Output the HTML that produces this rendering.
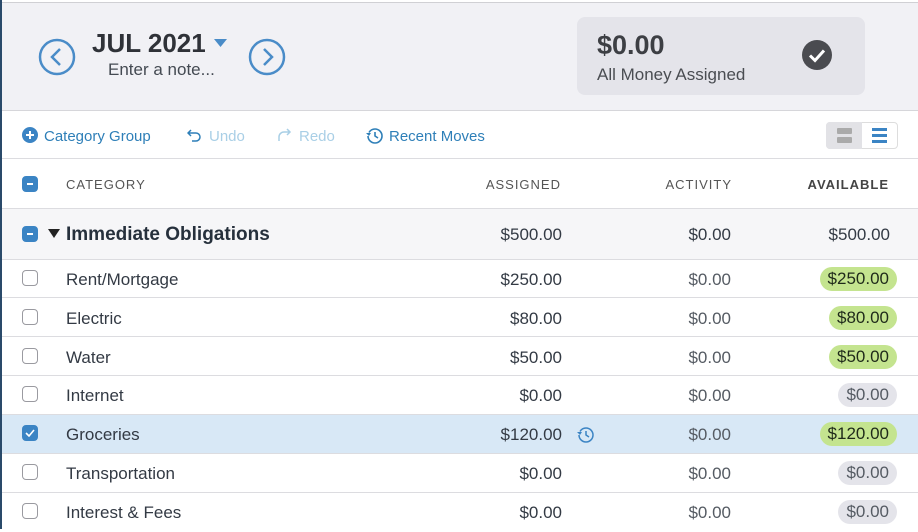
<!DOCTYPE html>
<html><head><style>
*{box-sizing:border-box;margin:0;padding:0}
body{width:918px;height:529px;overflow:hidden;background:#fff;font-family:"Liberation Sans",sans-serif;position:relative;color:#2f3640}
.lb{position:absolute;left:0;top:0;width:2px;height:529px;background:#2a4a6a}
.hdr{position:absolute;left:2px;top:2px;width:916px;height:109px;background:#f1f1f5;border-bottom:1px solid #d6d6da;border-top:1px solid #d0d0d4}
.abs{position:absolute}
.row{position:absolute;left:2px;width:916px;border-bottom:1px solid #dcdce0}
.cb{position:absolute;left:22px;width:16px;height:16px;border:1px solid #9a9aa0;border-radius:4px;background:#fff}
.name{position:absolute;left:66px;font-size:17px;color:#333a44}
.num{position:absolute;font-size:17px;text-align:right;color:#333a44}
.a{right:356px}.c{right:187px;color:#555b63}
.pill{position:absolute;right:21px;height:24px;border-radius:12px;padding:0 8px;font-size:17px;line-height:24px;color:#1f2a1a}
.g{background:#c4e48f}.z{background:#e4e4ea;color:#555b63}
.tb{position:absolute;top:128px;font-size:15px;color:#2e7fb8}
.th{position:absolute;top:177px;font-size:13px;letter-spacing:1px;color:#555}
</style></head><body>
<div class="lb"></div>
<div class="hdr"></div>
<svg class="abs" style="left:38px;top:38px" width="38" height="38"><circle cx="19" cy="19" r="17" fill="none" stroke="#4a8cc8" stroke-width="2.5"/><path d="M22 11l-8 8 8 8" fill="none" stroke="#4a8cc8" stroke-width="2.5"/></svg>
<svg class="abs" style="left:248px;top:38px" width="38" height="38"><circle cx="19" cy="19" r="17" fill="none" stroke="#4a8cc8" stroke-width="2.5"/><path d="M16 11l8 8-8 8" fill="none" stroke="#4a8cc8" stroke-width="2.5"/></svg>
<div class="abs" style="left:92px;top:28px;font-size:26px;font-weight:bold;color:#2f3238">JUL 2021</div>
<svg class="abs" style="left:214px;top:38px" width="14" height="10"><path d="M0 1h13l-6.5 8z" fill="#4a8cc8"/></svg>
<div class="abs" style="left:108px;top:60px;font-size:17px;color:#444a52">Enter a note...</div>
<div class="abs" style="left:577px;top:17px;width:288px;height:78px;background:#e4e4ea;border-radius:8px"></div>
<div class="abs" style="left:597px;top:30px;font-size:27px;font-weight:bold;color:#3d3f44">$0.00</div>
<div class="abs" style="left:597px;top:65px;font-size:17px;color:#4a4d52">All Money Assigned</div>
<svg class="abs" style="left:801px;top:39px" width="32" height="32"><circle cx="16" cy="16" r="15" fill="#4a4b50"/><path d="M9 16.5l5 5 9-10" fill="none" stroke="#fff" stroke-width="3"/></svg>
<div class="row" style="top:111px;height:48px;background:#fff"></div>
<svg class="abs" style="left:22px;top:127px" width="16" height="16"><circle cx="8" cy="8" r="8" fill="#3b84c4"/><path d="M8 4v8M4 8h8" stroke="#fff" stroke-width="2"/></svg>
<div class="tb" style="left:44px">Category Group</div>
<svg class="abs" style="left:187px;top:128px" width="16" height="14"><path d="M4 2L1 5l3 3M1 5h8a4 4 0 010 8H5" fill="none" stroke="#2e7fb8" stroke-width="1.5"/></svg>
<div class="tb" style="left:209px;color:#a9cfe6">Undo</div>
<svg class="abs" style="left:277px;top:128px" width="16" height="14"><path d="M10 1l3 3-3 3M13 4H7a5 5 0 00-5 5v4" fill="none" stroke="#a9cfe6" stroke-width="1.5"/></svg>
<div class="tb" style="left:299px;color:#a9cfe6">Redo</div>
<svg class="abs" style="left:365px;top:127px" width="18" height="17"><path d="M3 9a7 7 0 107-7 7 7 0 00-6 3.5" fill="none" stroke="#2e7fb8" stroke-width="1.6"/><path d="M1 6l3 3 2-3" fill="#2e7fb8"/><path d="M10 5v4l3 2" fill="none" stroke="#2e7fb8" stroke-width="1.6"/></svg>
<div class="tb" style="left:389px">Recent Moves</div>
<div class="abs" style="left:826px;top:122px;width:72px;height:27px;border:1px solid #ddd;border-radius:4px;background:#fff"></div>
<div class="abs" style="left:826px;top:122px;width:36px;height:27px;background:#e2e2e6;border-radius:4px 0 0 4px"></div>
<div class="abs" style="left:837px;top:128px;width:15px;height:6px;background:#aaa;border-radius:1px"></div>
<div class="abs" style="left:837px;top:137px;width:15px;height:6px;background:#aaa;border-radius:1px"></div>
<div class="abs" style="left:872px;top:128px;width:15px;height:3px;background:#3b84c4"></div>
<div class="abs" style="left:872px;top:134px;width:15px;height:3px;background:#3b84c4"></div>
<div class="abs" style="left:872px;top:140px;width:15px;height:3px;background:#3b84c4"></div>
<div class="row" style="top:159px;height:50px;background:#fff"></div>
<div class="cb" style="top:176px;background:#3b84c4;border-color:#3b84c4"><div style="position:absolute;left:4px;top:6px;width:6px;height:2px;background:#fff"></div></div>
<div class="th" style="left:66px">CATEGORY</div>
<div class="th" style="right:357px">ASSIGNED</div>
<div class="th" style="right:186px">ACTIVITY</div>
<div class="th" style="right:29px;font-weight:bold;color:#444">AVAILABLE</div>
<div class="row" style="top:209px;height:51px;background:#f6f6f8"></div>
<div class="cb" style="top:226px;background:#3b84c4;border-color:#3b84c4"><div style="position:absolute;left:4px;top:6px;width:6px;height:2px;background:#fff"></div></div>
<svg class="abs" style="left:48px;top:229px" width="12" height="9"><path d="M0 0h12l-6 9z" fill="#222"/></svg>
<div class="abs" style="left:66px;top:224px;font-size:19px;font-weight:bold;color:#26303c">Immediate Obligations</div>
<div class="num a" style="top:225px">$500.00</div>
<div class="num c" style="top:225px;color:#333a44">$0.00</div>
<div class="num" style="top:225px;right:28px">$500.00</div>

<div class="row" style="top:260px;height:38px"></div>
<div class="cb" style="top:270px"></div><div class="name" style="top:270px">Rent/Mortgage</div>
<div class="num a" style="top:270px">$250.00</div><div class="num c" style="top:270px">$0.00</div><div class="pill g" style="top:267px">$250.00</div>

<div class="row" style="top:298px;height:39px"></div>
<div class="cb" style="top:309px"></div><div class="name" style="top:309px">Electric</div>
<div class="num a" style="top:309px">$80.00</div><div class="num c" style="top:309px">$0.00</div><div class="pill g" style="top:306px">$80.00</div>

<div class="row" style="top:337px;height:39px"></div>
<div class="cb" style="top:348px"></div><div class="name" style="top:348px">Water</div>
<div class="num a" style="top:348px">$50.00</div><div class="num c" style="top:348px">$0.00</div><div class="pill g" style="top:345px">$50.00</div>

<div class="row" style="top:376px;height:39px"></div>
<div class="cb" style="top:386px"></div><div class="name" style="top:386px">Internet</div>
<div class="num a" style="top:386px">$0.00</div><div class="num c" style="top:386px">$0.00</div><div class="pill z" style="top:383px">$0.00</div>

<div class="row" style="top:415px;height:39px;background:#d8e8f6"></div>
<div class="cb" style="top:425px;background:#3b84c4;border-color:#3b84c4"><svg style="position:absolute;left:2px;top:3px" width="10" height="8"><path d="M1 4l3 3 5-6" fill="none" stroke="#fff" stroke-width="1.6"/></svg></div>
<div class="name" style="top:425px">Groceries</div>
<div class="num a" style="top:425px">$120.00</div>
<svg class="abs" style="left:576px;top:426px" width="18" height="17"><path d="M3 9a7 7 0 107-7 7 7 0 00-6 3.5" fill="none" stroke="#3b84c4" stroke-width="1.5"/><path d="M1 6l3 3 2-3" fill="#3b84c4"/><path d="M10 5v4l3 2" fill="none" stroke="#3b84c4" stroke-width="1.5"/></svg>
<div class="num c" style="top:425px">$0.00</div><div class="pill g" style="top:422px">$120.00</div>

<div class="row" style="top:454px;height:39px"></div>
<div class="cb" style="top:464px"></div><div class="name" style="top:464px">Transportation</div>
<div class="num a" style="top:464px">$0.00</div><div class="num c" style="top:464px">$0.00</div><div class="pill z" style="top:461px">$0.00</div>

<div class="row" style="top:493px;height:39px;border:none"></div>
<div class="cb" style="top:503px"></div><div class="name" style="top:503px">Interest &amp; Fees</div>
<div class="num a" style="top:503px">$0.00</div><div class="num c" style="top:503px">$0.00</div><div class="pill z" style="top:500px">$0.00</div>
</body></html>
